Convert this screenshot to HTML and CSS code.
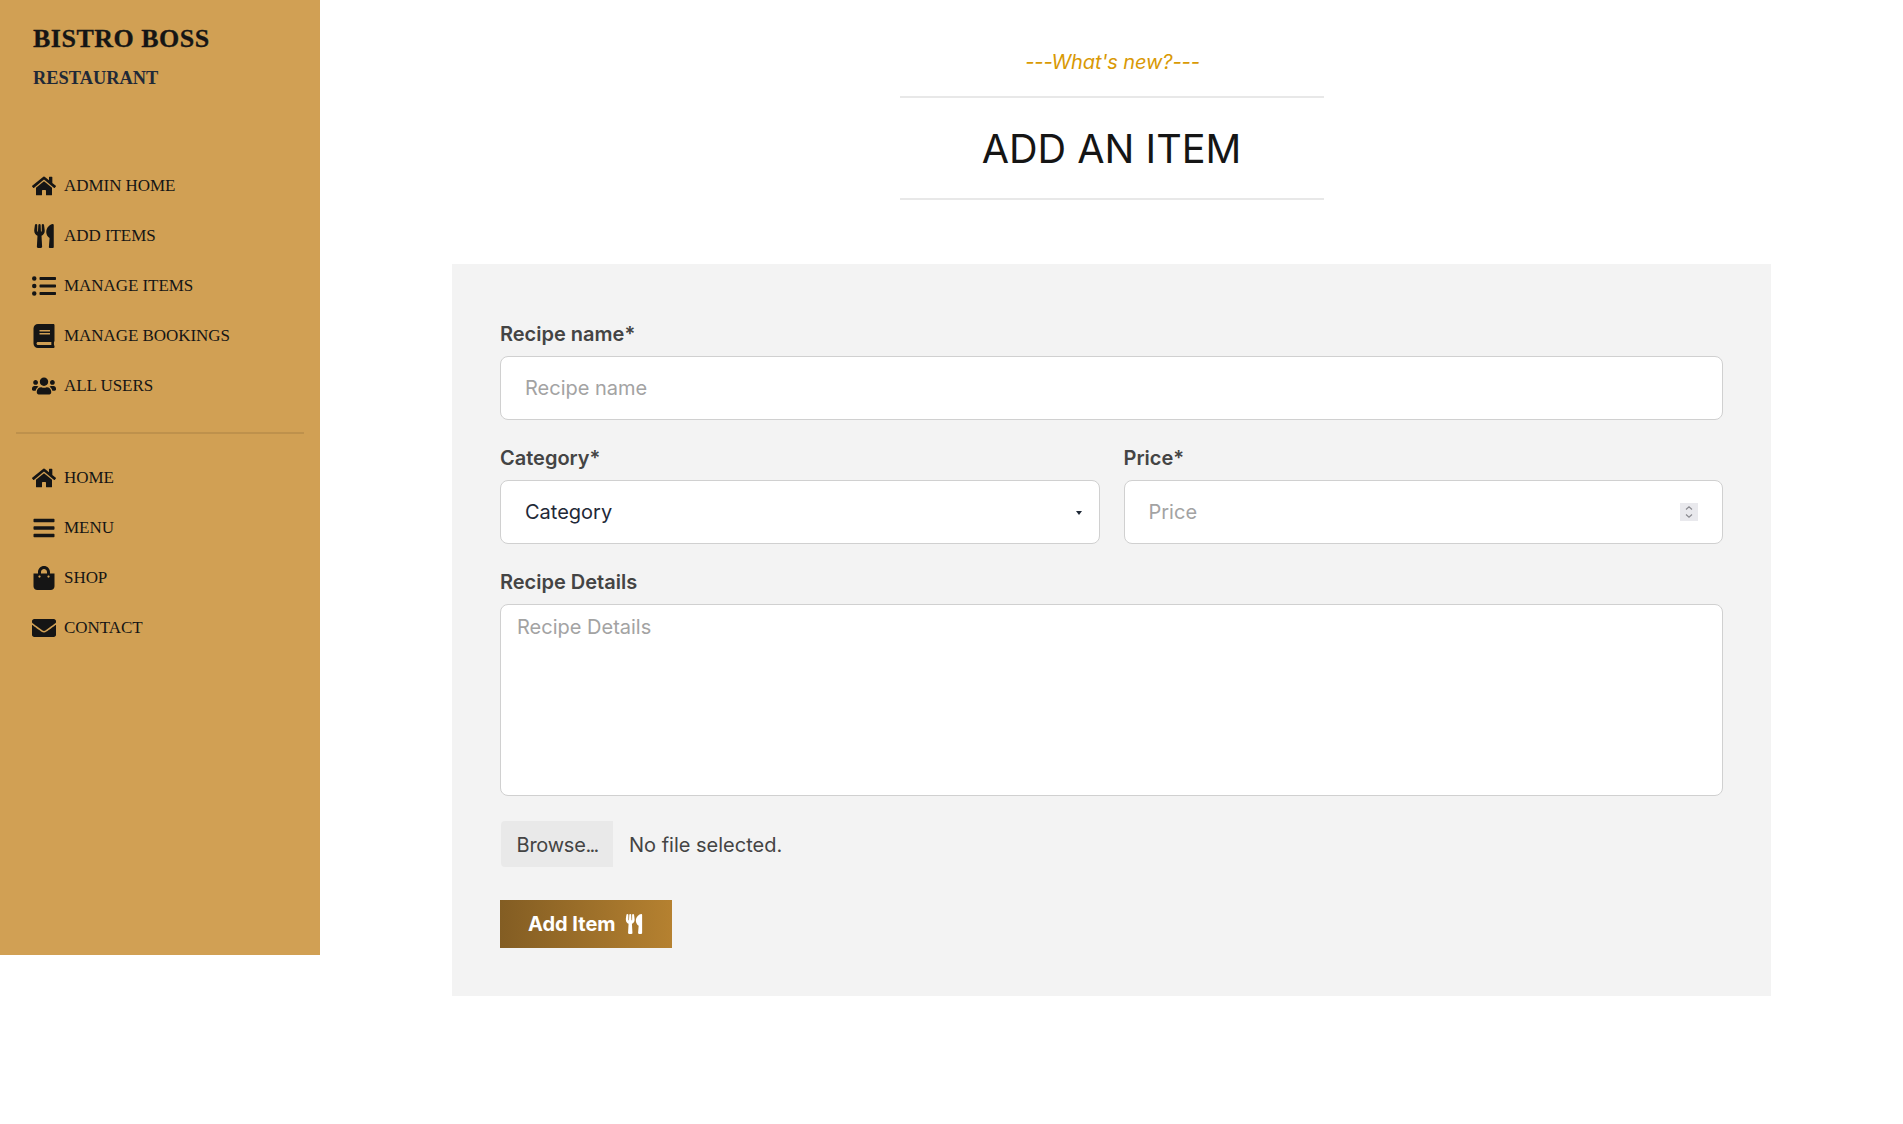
FILE: index.html
```html
<!DOCTYPE html>
<html lang="en">
<head>
<meta charset="utf-8">
<title>Add an Item - Bistro Boss</title>
<link rel="stylesheet" href="styles.css">
</head>
<body>
<div class="page">
  <aside class="sidebar">
    <div class="brand">
      <div class="brand-name">BISTRO BOSS</div>
      <div class="brand-sub">RESTAURANT</div>
    </div>
    <ul class="menu menu-admin">
      <li><a class="menu-link" href="#"><svg class="icon" viewBox="0 0 576 512"><path d="M280.37 148.26L96 300.11V464a16 16 0 0 0 16 16l112.06-.29a16 16 0 0 0 15.92-16V368a16 16 0 0 1 16-16h64a16 16 0 0 1 16 16v95.64a16 16 0 0 0 16 16.05L464 480a16 16 0 0 0 16-16V300L295.67 148.26a12.19 12.19 0 0 0-15.3 0zM571.6 251.47L488 182.56V44.05a12 12 0 0 0-12-12h-56a12 12 0 0 0-12 12v72.61L318.47 43a48 48 0 0 0-61 0L4.34 251.47a12 12 0 0 0-1.6 16.9l25.5 31A12 12 0 0 0 45.15 301l235.22-193.74a12.19 12.19 0 0 1 15.3 0L530.9 301a12 12 0 0 0 16.9-1.6l25.5-31a12 12 0 0 0-1.7-16.93z"/></svg>ADMIN HOME</a></li>
      <li><a class="menu-link" href="#"><svg class="icon" viewBox="0 0 416 512"><path d="M207.9 15.2c.8 4.7 16.1 94.5 16.1 128.8 0 52.3-27.8 89.6-68.9 104.6L168 486.7c.7 13.7-10.2 25.3-24 25.3H80c-13.7 0-24.7-11.5-24-25.3l12.9-238.1C27.7 233.6 0 196.2 0 144 0 109.6 15.3 19.9 16.1 15.2 19.3-5.1 61.4-5.4 64 16.3v141.2c1.3 3.4 15.1 3.2 16 0 1.4-25.3 7.9-139.2 8-141.8 3.3-20.8 44.7-20.8 47.9 0 .2 2.7 6.6 116.5 8 141.8.9 3.2 14.8 3.4 16 0V16.3c2.6-21.6 44.8-21.4 48-1.1zm119.2 285.7l-15 185.1c-1.2 14 9.9 26 23.9 26h56c13.3 0 24-10.7 24-24V24c0-13.2-10.7-24-24-24-82.5 0-221.4 178.5-64.9 300.9z"/></svg>ADD ITEMS</a></li>
      <li><a class="menu-link" href="#"><svg class="icon" viewBox="0 0 512 512"><path d="M48 48a48 48 0 1 0 48 48 48 48 0 0 0-48-48zm0 160a48 48 0 1 0 48 48 48 48 0 0 0-48-48zm0 160a48 48 0 1 0 48 48 48 48 0 0 0-48-48zm448 16H176a16 16 0 0 0-16 16v32a16 16 0 0 0 16 16h320a16 16 0 0 0 16-16v-32a16 16 0 0 0-16-16zm0-320H176a16 16 0 0 0-16 16v32a16 16 0 0 0 16 16h320a16 16 0 0 0 16-16V80a16 16 0 0 0-16-16zm0 160H176a16 16 0 0 0-16 16v32a16 16 0 0 0 16 16h320a16 16 0 0 0 16-16v-32a16 16 0 0 0-16-16z"/></svg>MANAGE ITEMS</a></li>
      <li><a class="menu-link" href="#"><svg class="icon" viewBox="0 0 448 512"><path d="M448 360V24c0-13.3-10.7-24-24-24H96C43 0 0 43 0 96v320c0 53 43 96 96 96h328c13.3 0 24-10.7 24-24v-16c0-7.5-3.5-14.3-8.9-18.7-4.2-15.4-4.2-59.3 0-74.7 5.4-4.3 8.9-11.1 8.9-18.6zM128 134c0-3.3 2.7-6 6-6h212c3.3 0 6 2.7 6 6v20c0 3.3-2.7 6-6 6H134c-3.3 0-6-2.7-6-6v-20zm0 64c0-3.3 2.7-6 6-6h212c3.3 0 6 2.7 6 6v20c0 3.3-2.7 6-6 6H134c-3.3 0-6-2.7-6-6v-20zm253.4 250H96c-17.7 0-32-14.3-32-32 0-17.6 14.4-32 32-32h285.4c-1.9 17.1-1.9 46.9 0 64z"/></svg>MANAGE BOOKINGS</a></li>
      <li><a class="menu-link" href="#"><svg class="icon" viewBox="0 0 640 512"><path d="M96 224c35.3 0 64-28.7 64-64s-28.7-64-64-64-64 28.7-64 64 28.7 64 64 64zm448 0c35.3 0 64-28.7 64-64s-28.7-64-64-64-64 28.7-64 64 28.7 64 64 64zm32 32h-64c-17.6 0-33.5 7.1-45.1 18.6 40.3 22.1 68.9 62 75.1 109.4h66c17.7 0 32-14.3 32-32v-32c0-35.3-28.7-64-64-64zm-256 0c61.9 0 112-50.1 112-112S381.9 32 320 32 208 82.1 208 144s50.1 112 112 112zm76.8 32h-8.3c-20.8 10-43.9 16-68.5 16s-47.6-6-68.5-16h-8.3C179.6 288 128 339.6 128 403.2V432c0 26.5 21.5 48 48 48h288c26.5 0 48-21.5 48-48v-28.8c0-63.6-51.6-115.2-115.2-115.2zm-223.7-13.4C161.5 263.1 145.6 256 128 256H64c-35.3 0-64 28.7-64 64v32c0 17.7 14.3 32 32 32h65.9c6.3-47.4 34.9-87.3 75.2-109.4z"/></svg>ALL USERS</a></li>
    </ul>
    <hr class="divider">
    <ul class="menu">
      <li><a class="menu-link" href="#"><svg class="icon" viewBox="0 0 576 512"><path d="M280.37 148.26L96 300.11V464a16 16 0 0 0 16 16l112.06-.29a16 16 0 0 0 15.92-16V368a16 16 0 0 1 16-16h64a16 16 0 0 1 16 16v95.64a16 16 0 0 0 16 16.05L464 480a16 16 0 0 0 16-16V300L295.67 148.26a12.19 12.19 0 0 0-15.3 0zM571.6 251.47L488 182.56V44.05a12 12 0 0 0-12-12h-56a12 12 0 0 0-12 12v72.61L318.47 43a48 48 0 0 0-61 0L4.34 251.47a12 12 0 0 0-1.6 16.9l25.5 31A12 12 0 0 0 45.15 301l235.22-193.74a12.19 12.19 0 0 1 15.3 0L530.9 301a12 12 0 0 0 16.9-1.6l25.5-31a12 12 0 0 0-1.7-16.93z"/></svg>HOME</a></li>
      <li><a class="menu-link" href="#"><svg class="icon" viewBox="0 0 448 512"><path d="M16 132h416c8.837 0 16-7.163 16-16V76c0-8.837-7.163-16-16-16H16C7.163 60 0 67.163 0 76v40c0 8.837 7.163 16 16 16zm0 160h416c8.837 0 16-7.163 16-16v-40c0-8.837-7.163-16-16-16H16c-8.837 0-16 7.163-16 16v40c0 8.837 7.163 16 16 16zm0 160h416c8.837 0 16-7.163 16-16v-40c0-8.837-7.163-16-16-16H16c-8.837 0-16 7.163-16 16v40c0 8.837 7.163 16 16 16z"/></svg>MENU</a></li>
      <li><a class="menu-link" href="#"><svg class="icon" viewBox="0 0 448 512"><path d="M352 160v-32C352 57.42 294.579 0 224 0 153.42 0 96 57.42 96 128v32H0v272c0 44.183 35.817 80 80 80h288c44.183 0 80-35.817 80-80V160h-96zm-192-32c0-35.29 28.71-64 64-64s64 28.71 64 64v32H160v-32zm160 120c-13.255 0-24-10.745-24-24s10.745-24 24-24 24 10.745 24 24-10.745 24-24 24zm-192 0c-13.255 0-24-10.745-24-24s10.745-24 24-24 24 10.745 24 24-10.745 24-24 24z"/></svg>SHOP</a></li>
      <li><a class="menu-link" href="#"><svg class="icon" viewBox="0 0 512 512"><path d="M502.3 190.8c3.9-3.1 9.7-.2 9.7 4.7V400c0 26.5-21.5 48-48 48H48c-26.5 0-48-21.5-48-48V195.6c0-5 5.7-7.8 9.7-4.7 22.4 17.4 52.1 39.5 154.1 113.6 21.1 15.4 56.7 47.8 92.2 47.6 35.7.3 72-32.8 92.3-47.6 102-74.1 131.6-96.3 154-113.7zM256 320c23.2.4 56.6-29.2 73.4-41.4 132.7-96.3 142.8-104.7 173.4-128.7 5.8-4.5 9.2-11.5 9.2-18.9v-19c0-26.5-21.5-48-48-48H48C21.5 64 0 85.5 0 112v19c0 7.4 3.4 14.3 9.2 18.9 30.6 23.9 40.7 32.4 173.4 128.7 16.8 12.2 50.2 41.8 73.4 41.4z"/></svg>CONTACT</a></li>
    </ul>
  </aside>
  <main class="main">
    <header class="section-title">
      <p class="eyebrow">---What's new?---</p>
      <h1 class="heading">ADD AN ITEM</h1>
    </header>
    <form class="card">
      <label class="field">
        <span class="label">Recipe name*</span>
        <input class="control" type="text" placeholder="Recipe name">
      </label>
      <div class="field-row">
        <div class="field">
          <span class="label">Category*</span>
          <div class="select-wrap">
            <select class="control select">
              <option>Category</option>
            </select>
          </div>
        </div>
        <label class="field">
          <span class="label">Price*</span>
          <span class="number-wrap">
            <input class="control number" type="number" placeholder="Price">
            <span class="spinner"><svg class="spinner-icon" viewBox="0 0 18 18"><path d="M6 6.5 9 3.8l3 2.7M6 11.5 9 14.2l3-2.7"/></svg></span>
          </span>
        </label>
      </div>
      <label class="field">
        <span class="label">Recipe Details</span>
        <textarea class="textarea" placeholder="Recipe Details"></textarea>
      </label>
      <div class="file-row">
        <button class="browse" type="button">Browse<span class="dots">...</span></button>
        <span class="file-name">No file selected.</span>
      </div>
      <button class="submit" type="button">Add Item<svg class="submit-icon" viewBox="0 0 416 512"><path d="M207.9 15.2c.8 4.7 16.1 94.5 16.1 128.8 0 52.3-27.8 89.6-68.9 104.6L168 486.7c.7 13.7-10.2 25.3-24 25.3H80c-13.7 0-24.7-11.5-24-25.3l12.9-238.1C27.7 233.6 0 196.2 0 144 0 109.6 15.3 19.9 16.1 15.2 19.3-5.1 61.4-5.4 64 16.3v141.2c1.3 3.4 15.1 3.2 16 0 1.4-25.3 7.9-139.2 8-141.8 3.3-20.8 44.7-20.8 47.9 0 .2 2.7 6.6 116.5 8 141.8.9 3.2 14.8 3.4 16 0V16.3c2.6-21.6 44.8-21.4 48-1.1zm119.2 285.7l-15 185.1c-1.2 14 9.9 26 23.9 26h56c13.3 0 24-10.7 24-24V24c0-13.2-10.7-24-24-24-82.5 0-221.4 178.5-64.9 300.9z"/></svg></button>
    </form>
  </main>
</div>
</body>
</html>
```
FILE: styles.css
```css
* { box-sizing: border-box; }
html, body { margin: 0; padding: 0; background: #fff; }
body { font-family: "Inter", "Liberation Sans", sans-serif; color: #151515; }

.page { display: flex; align-items: flex-start; }

.sidebar {
  width: 320px;
  height: 955px;
  flex: none;
  background: #D1A054;
  padding-top: 24px;
  font-family: "Liberation Serif", serif;
}
.brand { padding-left: 33px; margin-bottom: 71px; }
.brand-name { font-size: 26px; line-height: 30px; font-weight: 700; letter-spacing: 0.5px; color: #151515; -webkit-text-stroke: 0.3px #151515; }
.brand-sub { font-size: 18.4px; line-height: 24px; font-weight: 700; color: #1f2937; margin-top: 12px; }

.menu { list-style: none; margin: 0; padding: 0 16px; display: flex; flex-direction: column; }
.menu-link {
  height: 50px;
  display: flex;
  align-items: center;
  gap: 8px;
  padding: 0 16px;
  font-size: 17px;
  letter-spacing: -0.05px;
  color: #151515;
  text-decoration: none;
}
.icon { width: 24px; height: 24px; flex: none; fill: #151515; }

.divider {
  margin: 21px 16px 19px;
  border: 0;
  height: 2px;
  background: #BE914C;
}

.main { flex: 1; min-width: 0; display: flex; flex-direction: column; align-items: center; padding-bottom: 128px; }

.section-title { width: 424px; text-align: center; margin-bottom: 64px; padding-top: 48px; }
.eyebrow { margin: 0 0 20px; padding-left: 2px; font-size: 20px; line-height: 28px; font-style: italic; letter-spacing: -0.1px; color: #D99904; }
.heading {
  margin: 0;
  border-top: 2px solid #E8E8E8;
  border-bottom: 2px solid #E8E8E8;
  padding: 21px 0 19px;
  font-size: 39.6px;
  line-height: 60px;
  font-weight: 400;
  color: #151515;
}

.card { width: 1319px; background: #F3F3F3; padding: 48px; display: flex; flex-direction: column; }

.field { display: flex; flex-direction: column; min-width: 0; flex: 1; }
.field-row { display: flex; gap: 24px; margin-top: 16px; }
.field-row + .field { margin-top: 16px; }
.label { padding: 8px 0; font-size: 20px; line-height: 28px; font-weight: 600; color: #444; }

.control {
  height: 64px;
  width: 100%;
  padding: 0 24px;
  background: #fff;
  border: 1px solid #D0D0D0;
  border-radius: 8px;
  font: inherit;
  font-size: 20px;
  color: #1f2937;
  outline: none;
}
.control::placeholder, .textarea::placeholder { color: #a3a3a3; opacity: 1; }

.select-wrap { position: relative; }
.select { appearance: none; -webkit-appearance: none; }
.select-wrap::after {
  content: "";
  position: absolute;
  right: 18px;
  top: 31px;
  border-left: 3.5px solid transparent;
  border-right: 3.5px solid transparent;
  border-top: 4px solid #1f2937;
}

.number-wrap { position: relative; display: block; }
.number { appearance: textfield; -moz-appearance: textfield; display: block; }
.number::-webkit-inner-spin-button, .number::-webkit-outer-spin-button { -webkit-appearance: none; margin: 0; }
.spinner {
  position: absolute;
  right: 25px;
  top: 23px;
  width: 18px;
  height: 18px;
  background: #E9E9ED;
}
.spinner-icon { display: block; width: 18px; height: 18px; fill: none; stroke: #8a8a90; stroke-width: 1.2; }

.textarea {
  height: 192px;
  padding: 8px 16px;
  background: #fff;
  border: 1px solid #D0D0D0;
  border-radius: 8px;
  font: inherit;
  font-size: 20px;
  line-height: 28px;
  resize: none;
  outline: none;
  display: block;
  width: 100%;
}

.file-row { display: flex; align-items: center; gap: 16px; margin-top: 25px; height: 46px; padding-left: 1px; }
.browse {
  height: 46px;
  width: 112px;
  padding: 1px 0 0;
  background: #E9E9E9;
  border: 0;
  border-radius: 4px 0 0 4px;
  font: inherit;
  font-size: 20px;
  letter-spacing: -0.25px;
  color: #444;
}
.dots { letter-spacing: -1.8px; }
.file-name { font-size: 20px; color: #444; padding-top: 1px; }

.submit {
  margin-top: 33px;
  align-self: flex-start;
  width: 172px;
  height: 48px;
  display: flex;
  align-items: center;
  justify-content: center;
  gap: 9px;
  border: 0;
  padding: 0 1.5px 0 0;
  background: linear-gradient(90deg, #835D23, #B58130);
  color: #fff;
  font: inherit;
  font-size: 20px;
  font-weight: 700;
}
.submit-icon { width: 18px; height: 20px; fill: #fff; }
```
